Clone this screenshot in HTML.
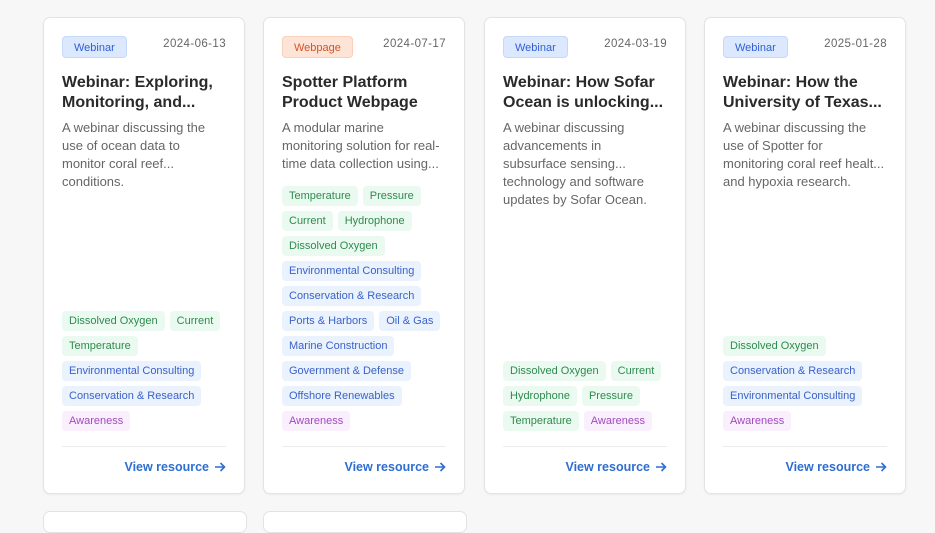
<!DOCTYPE html>
<html><head><style>
body{margin:0;width:935px;height:515px;background:#f7f7f8;font-family:"Liberation Sans",sans-serif;overflow:hidden;position:relative}
.card{position:absolute;top:17px;width:202px;height:477px;background:#fff;border:1px solid #e3e3e6;border-radius:7px;box-sizing:border-box;padding:18px 18px 0 18px;display:flex;flex-direction:column;box-shadow:0 1px 2px rgba(0,0,0,.05)}
.top{display:flex;justify-content:space-between;align-items:flex-start;height:23px}
.badge{font-size:11px;padding:0 11px;height:22px;line-height:22px;border-radius:4px;background:#dbe8fd;color:#2f5fd6;border:1px solid #c5d8fa;box-sizing:border-box}
.badge.o{background:#fde4d6;color:#d2542a;border-color:#f8cfb8}
.date{font-size:11.5px;color:#666;margin-top:2px;letter-spacing:.4px}
h3{margin:14px 0 0;font-size:16px;line-height:20px;color:#2a2a2a;font-weight:bold}
p{margin:6px 0 0;font-size:13px;line-height:18px;color:#666}
.tags{margin-top:auto;display:flex;flex-wrap:wrap;gap:5px 5px}
.t{font-size:11px;height:20px;line-height:20px;padding:0 7px;border-radius:4px}
.g{background:#eafaf0;color:#2f8a4e}.b{background:#eaf2fe;color:#3b62c8}.p{background:#faeffc;color:#a24ac0}
.sep{border-top:1px solid #ececee;margin-top:15px}
.v{height:46px;flex:none;font-size:12.5px;color:#2e6ed0;font-weight:bold;display:flex;justify-content:flex-end;align-items:center;padding-bottom:6px;box-sizing:border-box}
.v svg{margin-left:5px}
.ghost{position:absolute;top:511px;width:202px;height:20px;background:#fff;border:1px solid #e3e3e6;border-radius:7px}
</style></head><body>
<div class="card" style="left:43px">
<div class="top"><span class="badge">Webinar</span><span class="date">2024-06-13</span></div>
<h3>Webinar: Exploring, Monitoring, and...</h3>
<p>A webinar discussing the use of ocean data to monitor coral reef... conditions.</p>
<div class="tags"><span class="t g">Dissolved Oxygen</span><span class="t g">Current</span><span class="t g">Temperature</span><span class="t b">Environmental Consulting</span><span class="t b">Conservation &amp; Research</span><span class="t p">Awareness</span></div>
<div class="sep"></div><div class="v">View resource<svg width="12" height="12" viewBox="0 0 12 12"><path d="M1 6H10.5M6.5 2L10.5 6L6.5 10" fill="none" stroke="#2e6ed0" stroke-width="1.6"/></svg></div></div>

<div class="card" style="left:263px">
<div class="top"><span class="badge o">Webpage</span><span class="date">2024-07-17</span></div>
<h3>Spotter Platform Product Webpage</h3>
<p>A modular marine monitoring solution for real-time data collection using...</p>
<div class="tags"><span class="t g">Temperature</span><span class="t g">Pressure</span><span class="t g">Current</span><span class="t g">Hydrophone</span><span class="t g">Dissolved Oxygen</span><span class="t b">Environmental Consulting</span><span class="t b">Conservation &amp; Research</span><span class="t b">Ports &amp; Harbors</span><span class="t b">Oil &amp; Gas</span><span class="t b">Marine Construction</span><span class="t b">Government &amp; Defense</span><span class="t b">Offshore Renewables</span><span class="t p">Awareness</span></div>
<div class="sep"></div><div class="v">View resource<svg width="12" height="12" viewBox="0 0 12 12"><path d="M1 6H10.5M6.5 2L10.5 6L6.5 10" fill="none" stroke="#2e6ed0" stroke-width="1.6"/></svg></div></div>

<div class="card" style="left:484px">
<div class="top"><span class="badge">Webinar</span><span class="date">2024-03-19</span></div>
<h3>Webinar: How Sofar Ocean is unlocking...</h3>
<p>A webinar discussing advancements in subsurface sensing... technology and software updates by Sofar Ocean.</p>
<div class="tags"><span class="t g">Dissolved Oxygen</span><span class="t g">Current</span><span class="t g">Hydrophone</span><span class="t g">Pressure</span><span class="t g">Temperature</span><span class="t p">Awareness</span></div>
<div class="sep"></div><div class="v">View resource<svg width="12" height="12" viewBox="0 0 12 12"><path d="M1 6H10.5M6.5 2L10.5 6L6.5 10" fill="none" stroke="#2e6ed0" stroke-width="1.6"/></svg></div></div>

<div class="card" style="left:704px">
<div class="top"><span class="badge">Webinar</span><span class="date">2025-01-28</span></div>
<h3>Webinar: How the University of Texas...</h3>
<p>A webinar discussing the use of Spotter for monitoring coral reef healt... and hypoxia research.</p>
<div class="tags"><span class="t g">Dissolved Oxygen</span><span class="t b">Conservation &amp; Research</span><span class="t b">Environmental Consulting</span><span class="t p">Awareness</span></div>
<div class="sep"></div><div class="v">View resource<svg width="12" height="12" viewBox="0 0 12 12"><path d="M1 6H10.5M6.5 2L10.5 6L6.5 10" fill="none" stroke="#2e6ed0" stroke-width="1.6"/></svg></div></div>
<div class="ghost" style="left:43px"></div><div class="ghost" style="left:263px"></div>
</body></html>
